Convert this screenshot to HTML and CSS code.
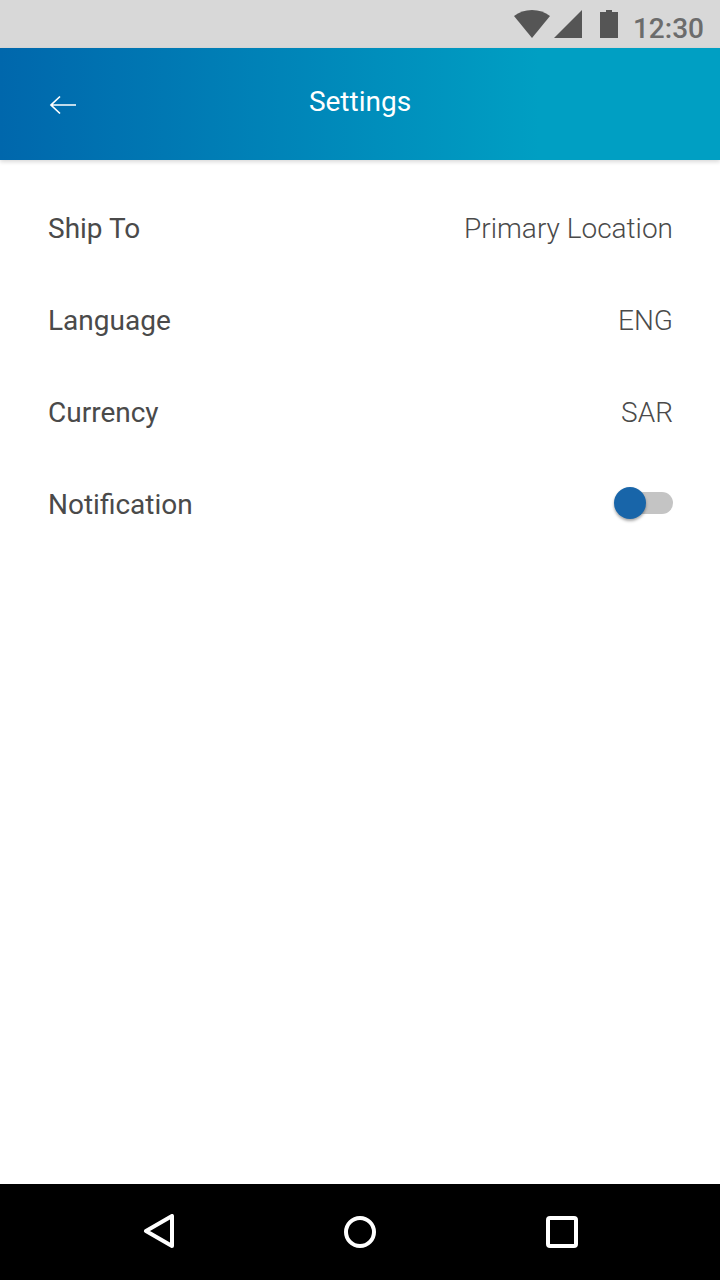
FILE: index.html
```html
<!DOCTYPE html>
<html lang="en">
<head>
<meta charset="utf-8">
<meta name="viewport" content="width=device-width, initial-scale=1">
<title>Settings</title>
<link rel="stylesheet" href="styles.css">
</head>
<body>
<div class="screen">
  <div class="status-bar">
    <svg class="status-icons" width="104" height="28" viewBox="0 0 104 28" fill="#555" aria-hidden="true">
      <path d="M0 6C5 2 11 0 18 0s13 2 18 6L18 28z"/>
      <path d="M68 0v28H40z"/>
      <path d="M86 2h6V0h6v2h6v26H86z"/>
    </svg>
    <time class="clock">12:30</time>
  </div>

  <header class="app-bar">
    <button class="back" type="button" aria-label="Back">
      <svg width="28" height="20" viewBox="0 0 28 20" fill="none" stroke="#fff" stroke-width="1.7" aria-hidden="true">
        <path d="M28 10H3M12 1.5L3 10l9 8.5"/>
      </svg>
    </button>
    <h1 class="title">Settings</h1>
  </header>

  <main class="settings">
    <div class="row">
      <span class="label" id="ship">Ship To</span>
      <button class="value" type="button" id="ship-value" aria-labelledby="ship ship-value">Primary Location</button>
    </div>
    <div class="row">
      <span class="label" id="lang">Language</span>
      <button class="value" type="button" id="lang-value" aria-labelledby="lang lang-value">ENG</button>
    </div>
    <div class="row">
      <span class="label" id="currency">Currency</span>
      <button class="value" type="button" id="currency-value" aria-labelledby="currency currency-value">SAR</button>
    </div>
    <div class="row">
      <label class="label" for="notification">Notification</label>
      <input class="switch" type="checkbox" role="switch" id="notification">
    </div>
  </main>

  <nav class="nav-bar" aria-label="System">
    <button class="nav-button" type="button" aria-label="Back">
      <svg width="36" height="36" viewBox="0 0 36 36" fill="none" stroke="#fff" stroke-width="4" stroke-linejoin="round" aria-hidden="true"><path d="M32 2v30L6 17z"/></svg>
    </button>
    <button class="nav-button" type="button" aria-label="Home">
      <svg width="36" height="36" viewBox="0 0 36 36" fill="none" stroke="#fff" stroke-width="4" aria-hidden="true"><circle cx="18" cy="18" r="14"/></svg>
    </button>
    <button class="nav-button" type="button" aria-label="Recent apps">
      <svg width="36" height="36" viewBox="0 0 36 36" fill="none" stroke="#fff" stroke-width="4" aria-hidden="true"><rect x="4" y="4" width="28" height="28" rx="2"/></svg>
    </button>
  </nav>
</div>
</body>
</html>
```
FILE: styles.css
```css
* {
  box-sizing: border-box;
}

body {
  margin: 0;
  background: #fff;
  color: #4a4a4a;
  font-family: Roboto, "Liberation Sans", sans-serif;
  font-size: 28px;
  line-height: 32px;
}

button {
  padding: 0;
  border: 0;
  background: none;
  color: inherit;
  font: inherit;
  cursor: pointer;
}

svg {
  display: block;
}

.screen {
  display: flex;
  flex-direction: column;
  min-height: 100vh;
}

.status-bar {
  display: flex;
  justify-content: flex-end;
  gap: 15px;
  padding: 10px 16px;
  height: 48px;
  background: #d8d8d8;
}

.clock {
  padding-top: 3px;
  color: #6c6c6c;
  font-weight: 500;
}

.app-bar {
  display: grid;
  grid-template-columns: 1fr auto 1fr;
  align-items: center;
  padding: 38px 48px;
  background: linear-gradient(90deg, #0067ac 0%, #009fc3 75%);
  box-shadow: 0 2px 4px rgba(0, 0, 0, 0.15);
}

.back {
  justify-self: start;
  padding-top: 2px;
}

.title {
  margin: 0;
  padding-bottom: 4px;
  color: #fff;
  font-size: 28px;
  font-weight: 400;
}

.settings {
  display: flex;
  flex: 1;
  flex-direction: column;
  gap: 60px;
  padding: 53px 47px 52px 48px;
}

.row {
  display: flex;
  align-items: center;
  justify-content: space-between;
}

.value {
  font-weight: 300;
}

.switch {
  position: relative;
  appearance: none;
  width: 56px;
  height: 22px;
  margin: 0 0 4px;
  border-radius: 11px;
  background: #c4c4c4;
  cursor: pointer;
}

.switch::before {
  content: "";
  position: absolute;
  top: -5px;
  left: -3px;
  width: 32px;
  height: 32px;
  border-radius: 50%;
  background: #1865a9;
  box-shadow: 0 2px 3px rgba(0, 0, 0, 0.35);
}

.switch:checked::before {
  left: 27px;
}

.nav-bar {
  display: flex;
  align-items: center;
  justify-content: center;
  gap: 166px;
  height: 96px;
  background: #000;
}
```
